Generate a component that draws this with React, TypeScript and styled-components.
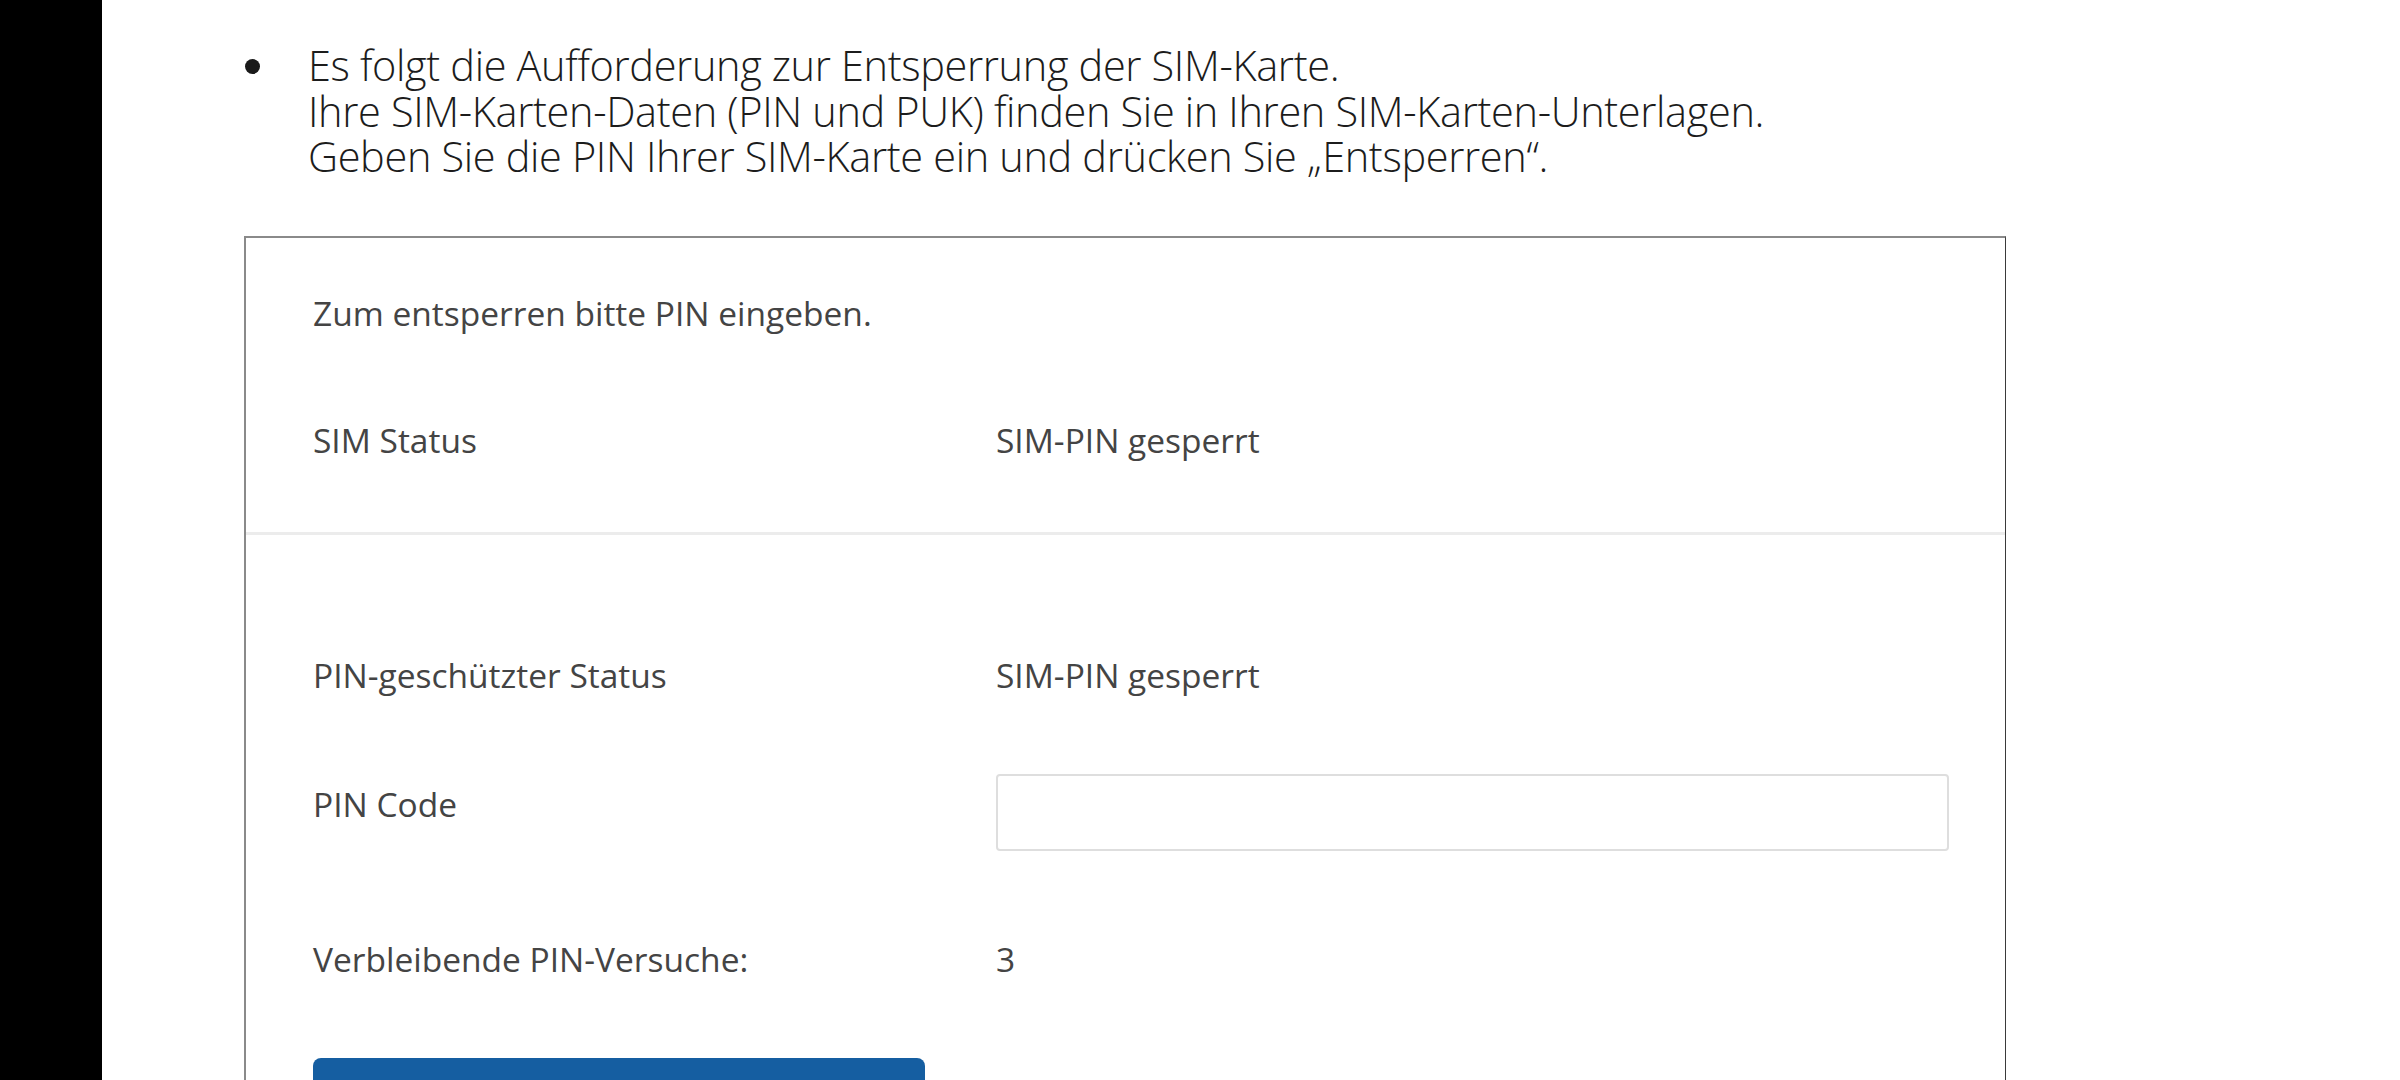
import React from "react";
import styled, { createGlobalStyle } from "styled-components";

const GlobalStyle = createGlobalStyle`
  html, body {
    margin: 0;
    padding: 0;
    background: #fff;
  }
  body {
    width: 2400px;
    height: 1080px;
    overflow: hidden;
  }
`;

const Page = styled.div`
  display: flex;
  width: 2400px;
  height: 1080px;
  overflow: hidden;
  background: #fff;
`;

const SideBar = styled.div`
  flex: 0 0 102px;
  background: #000;
`;

const Content = styled.main`
  flex: 1;
  display: flex;
  flex-direction: column;
  padding-left: 142px;
`;

// manual text with bullet
const Instruction = styled.div`
  display: flex;
  align-items: flex-start;
  margin-top: 43px;
`;

const Dot = styled.span`
  flex: 0 0 15px;
  width: 15px;
  height: 15px;
  margin: 16px 48px 0 1px;
  border-radius: 50%;
  background: #1a1a1a;
`;

const InstructionText = styled.p`
  margin: 0;
  font-family: "Open Sans", "Noto Sans", "DejaVu Sans", sans-serif;
  font-weight: 300;
  font-size: 41.5px;
  letter-spacing: -0.35px;
  line-height: 45.5px;
  color: #1c1c1c;
  white-space: nowrap;
`;

// screenshot of the router page
const Panel = styled.section`
  flex: 1;
  width: 1762px;
  box-sizing: border-box;
  margin-top: 56px;
  border-top: 2px solid #8a8a8a;
  border-left: 2px solid #8a8a8a;
  border-right: 1px solid #3a3a3a;
  font-family: "Open Sans", "DejaVu Sans", sans-serif;
  font-size: 33.5px;
  line-height: 36px;
  color: #444;
`;

const Section = styled.div<{ $top: number; $bottom: number; $divider?: boolean }>`
  display: flex;
  flex-direction: column;
  padding: ${(p) => p.$top}px 0 ${(p) => p.$bottom}px 67px;
  border-bottom: ${(p) => (p.$divider ? "3px solid #ececec" : "none")};
`;

const Note = styled.div`
  height: 36px;
`;

const Row = styled.div<{ $before?: number }>`
  display: grid;
  grid-template-columns: 683px 953px;
  align-items: start;
  margin-top: ${(p) => p.$before ?? 0}px;
`;

const Label = styled.span<{ $offset?: number }>`
  display: block;
  margin-top: ${(p) => p.$offset ?? 0}px;
`;

const Value = styled.span`
  display: block;
`;

const PinInput = styled.input`
  box-sizing: border-box;
  width: 953px;
  height: 77px;
  border: 2px solid #dedede;
  border-radius: 4px;
  background: #fff;
  outline: none;
  font: inherit;
  padding: 0 16px;
`;

const UnlockButton = styled.button`
  width: 612px;
  height: 80px;
  margin-top: 81px;
  border: none;
  border-radius: 8px;
  background: #155ea1;
  color: #fff;
  font: inherit;
`;

export default function App() {
  return (
    <>
      <GlobalStyle />
      <Page>
        <SideBar />
        <Content>
          <Instruction>
            <Dot />
            <InstructionText>
              Es folgt die Aufforderung zur Entsperrung der SIM-Karte.
              <br />
              Ihre SIM-Karten-Daten (PIN und PUK) finden Sie in Ihren SIM-Karten-Unterlagen.
              <br />
              Geben Sie die PIN Ihrer SIM-Karte ein und drücken Sie „Entsperren“.
            </InstructionText>
          </Instruction>

          <Panel>
            <Section $top={57} $bottom={74} $divider>
              <Note>Zum entsperren bitte PIN eingeben.</Note>
              <Row $before={91}>
                <Label>SIM Status</Label>
                <Value>SIM-PIN gesperrt</Value>
              </Row>
            </Section>

            <Section $top={122} $bottom={0}>
              <Row>
                <Label>PIN-geschützter Status</Label>
                <Value>SIM-PIN gesperrt</Value>
              </Row>
              <Row $before={81}>
                <Label $offset={12}>PIN Code</Label>
                <PinInput type="password" />
              </Row>
              <Row $before={90}>
                <Label>Verbleibende PIN-Versuche:</Label>
                <Value>3</Value>
              </Row>
              <UnlockButton type="button" />
            </Section>
          </Panel>
        </Content>
      </Page>
    </>
  );
}
